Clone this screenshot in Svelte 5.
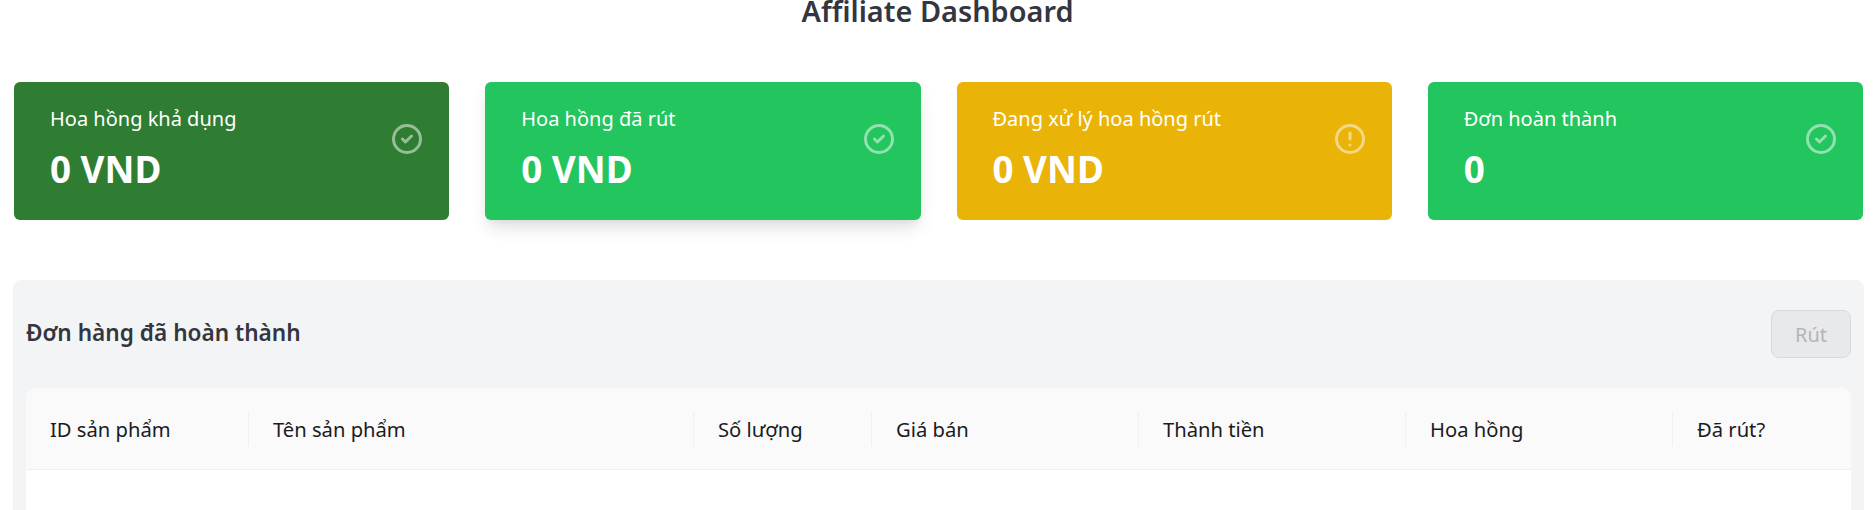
<script>
  const cards = [
    { label: 'Hoa hồng khả dụng', value: '0 VND', tone: 'dark', icon: 'check' },
    { label: 'Hoa hồng đã rút', value: '0 VND', tone: 'green raised', icon: 'check' },
    { label: 'Đang xử lý hoa hồng rút', value: '0 VND', tone: 'amber', icon: 'alert' },
    { label: 'Đơn hoàn thành', value: '0', tone: 'green', icon: 'check' }
  ];
  const cols = [
    ['ID sản phẩm', 222], ['Tên sản phẩm', 445], ['Số lượng', 178], ['Giá bán', 267],
    ['Thành tiền', 267], ['Hoa hồng', 267], ['Đã rút?', 179]
  ];
</script>

<main class="page">
  <h1>Affiliate Dashboard</h1>

  <section class="cards">
    {#each cards as c}
      <article class="card {c.tone}">
        <div>
          <p class="label">{c.label}</p>
          <p class="value">{c.value}</p>
        </div>
        <svg class="icon" viewBox="0 0 24 24" fill="none" stroke="currentColor" stroke-width="2" stroke-linecap="round" stroke-linejoin="round">
          {#if c.icon === 'check'}
            <path d="M9 12l2 2 4-4m6 2a9 9 0 11-18 0 9 9 0 0118 0z"></path>
          {:else}
            <path d="M12 8v4m0 4h.01M21 12a9 9 0 11-18 0 9 9 0 0118 0z"></path>
          {/if}
        </svg>
      </article>
    {/each}
  </section>

  <section class="panel">
    <header class="panel-head">
      <h2>Đơn hàng đã hoàn thành</h2>
      <button disabled>Rút</button>
    </header>
    <table>
      <colgroup>
        {#each cols as col}<col class="col" width={col[1]} />{/each}
      </colgroup>
      <thead>
        <tr>
          {#each cols as col}<th><span>{col[0]}</span></th>{/each}
        </tr>
      </thead>
      <tbody><tr><td colspan="7"></td></tr></tbody>
    </table>
  </section>
</main>

<style>
  :global(body) { margin: 0; background: #fff; overflow: hidden; }
  .page {
    height: 510px; overflow: hidden; box-sizing: border-box;
    font-family: "Noto Sans", "Open Sans", sans-serif; color: #2d2f36;
  }
  h1 { margin: 0; text-align: center; font-size: 28.9px; line-height: 22px; font-weight: 600; color: #33363f; }
  .cards {
    display: grid; grid-template-columns: repeat(4, 1fr); gap: 36px;
    margin: 60px 12px 0 14px;
  }
  .card {
    height: 138px; box-sizing: border-box; border-radius: 6px; color: #fff;
    padding: 23px 24px 0 36px; display: flex; justify-content: space-between; align-items: flex-start;
  }
  .dark { background: #2e7d32; }
  .green { background: #22c55e; }
  .amber { background: #eab308; }
  .raised { box-shadow: 0 10px 18px -3px rgba(0,0,0,.13), 0 4px 6px -2px rgba(0,0,0,.05); }
  .label { margin: 0; font-size: 20px; line-height: 28px; }
  .value { margin: 16px 0 0; font-size: 36.8px; line-height: 40px; font-weight: 700; }
  .icon { width: 36px; height: 36px; margin-top: 16px; opacity: .5; flex: none; }
  .panel {
    margin: 60px 11px 0 13px; height: 400px; background: #f3f4f6; border-radius: 8px;
    padding: 0 13px;
  }
  .panel-head { height: 108px; display: flex; justify-content: space-between; align-items: center; }
  h2 { margin: 0 0 2px; font-size: 22.6px; line-height: 28px; font-weight: 600; color: #33363f; }
  button {
    width: 80px; height: 48px; border: 1px solid #d9d9d9; border-radius: 8px;
    background: #e8e9eb; color: #b5b5b5; font: 400 20px "Noto Sans", sans-serif;
  }
  table {
    width: 100%; border-collapse: separate; border-spacing: 0; table-layout: fixed;
    background: #fff; border-radius: 10px 10px 0 0;
  }
  th {
    height: 82px; padding: 0; background: #fafafa; border-bottom: 1px solid #f0f0f0;
    text-align: left; font-size: 20.2px; font-weight: 400; color: #1b1b1f; box-sizing: border-box;
  }
  th:first-child { border-top-left-radius: 10px; }
  th:last-child { border-top-right-radius: 10px; }
  th span { display: flex; align-items: center; height: 34px; padding-left: 24px; border-left: 1px solid #f0f0f0; }
  th:first-child span { border-left: 0; }
  td { height: 200px; padding: 0; }
</style>
